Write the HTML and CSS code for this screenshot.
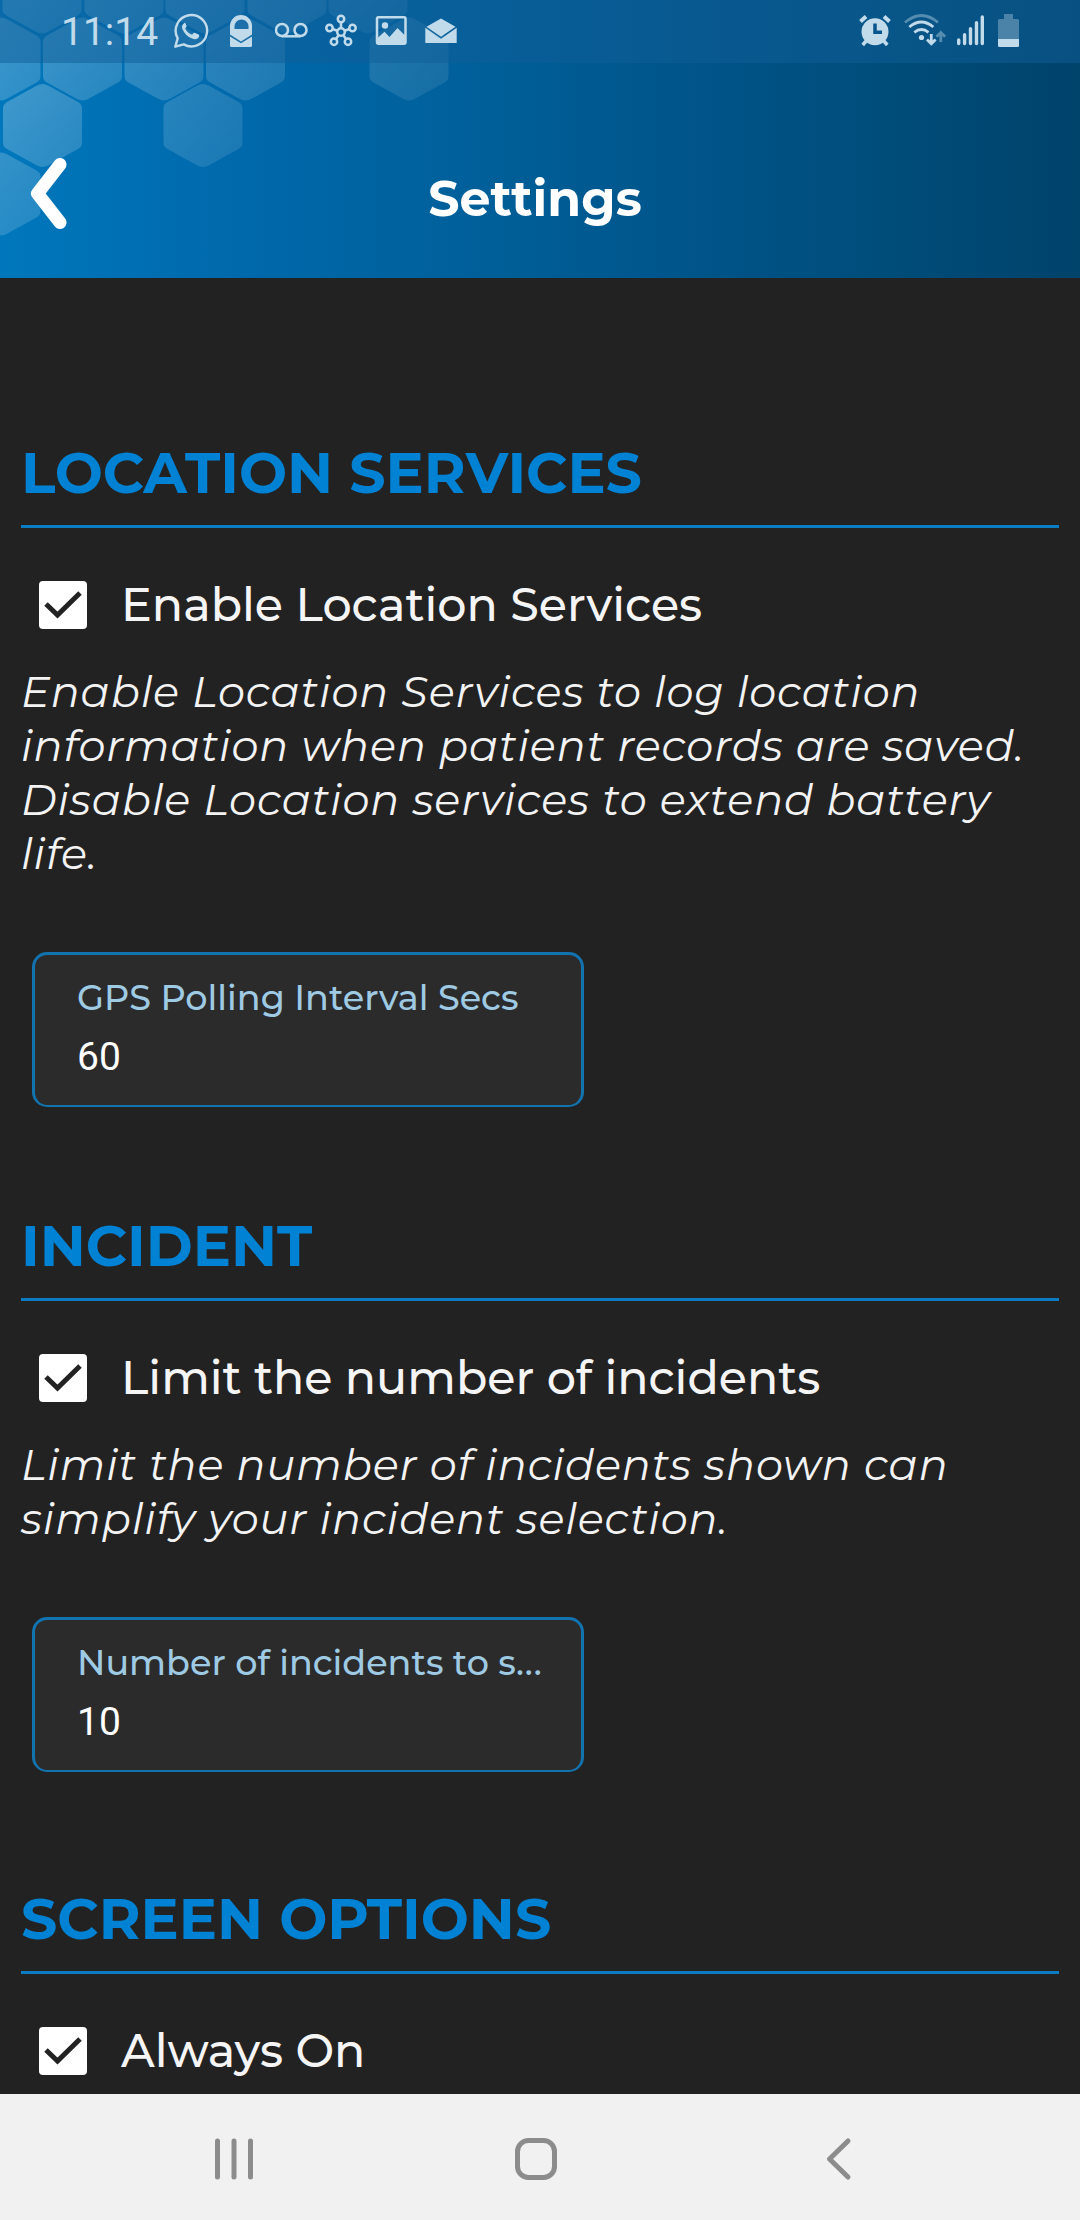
FILE: index.html
```html
<!DOCTYPE html>
<html lang="en">
<head>
<meta charset="utf-8">
<title>Settings</title>
<link rel="stylesheet" href="styles.css">
</head>
<body>
<div class="screen">
  <header class="header">
    <svg class="honeycomb" viewBox="0 0 480 278" width="480" height="278">
      <defs>
        <linearGradient id="sheen" x1="0" y1="0" x2="1" y2="1">
          <stop offset="0" stop-color="#fff" stop-opacity="1"/>
          <stop offset="1" stop-color="#fff" stop-opacity=".62"/>
        </linearGradient>
        <path id="hex" fill="url(#sheen)" d="M-39.5-17Q-39.500-21.500-35.500-23.500L-6-39.800Q0-43 6-39.800L35.500-23.500Q39.500-21.500 39.500-17V17Q39.500 21.500 35.500 23.500L6 39.800Q0 43-6 39.800L-35.500 23.500Q-39.500 21.500-39.500 17Z"/>
      </defs>
      <use href="#hex" x="42" y="-8" opacity=".25"/>
      <use href="#hex" x="124" y="-8" opacity=".23"/>
      <use href="#hex" x="205" y="-8" opacity=".21"/>
      <use href="#hex" x="287" y="-8" opacity=".19"/>
      <use href="#hex" x="368" y="-8" opacity=".14"/>
      <use href="#hex" x="1" y="59" opacity=".27"/>
      <use href="#hex" x="82.500" y="59" opacity=".24"/>
      <use href="#hex" x="164" y="59" opacity=".21"/>
      <use href="#hex" x="245.500" y="59" opacity=".18"/>
      <use href="#hex" x="409" y="59" opacity=".13"/>
      <use href="#hex" x="42.500" y="125.500" opacity=".25"/>
      <use href="#hex" x="203" y="125.500" opacity=".16"/>
      <use href="#hex" x="1" y="194" opacity=".22"/>
    </svg>
    <div class="status">
      <span class="clock">11:14</span>
      <div class="notifications">
        <svg class="icon" viewBox="173 13 36 36"><path d="M175.300 46.700l2.400-8.300a15.700 15.700 0 1 1 6 6z" fill="none" stroke="currentColor" stroke-width="2.400" stroke-linejoin="round"/><path d="M184.200 23.200c-2 1-2.700 3.200-1.800 5.700 1.700 4.300 5.200 8 9.700 9.700 3.600 1.300 6.300.200 7-2.400.3-1.100-.2-1.500-1-1.900l-3-1.400c-.8-.4-1.200-.2-1.700.4l-1.300 1.500c-3.200-1-5.600-3.300-7-6.200l1.200-1.500c.4-.5.4-.8.200-1.400l-1.200-2.700c-.2-.4-.6-.3-1.100.2z" fill="currentColor"/></svg>
        <svg class="icon" viewBox="223 13 36 36"><path fill="currentColor" fill-rule="evenodd" d="M230 34.500V26a11 11 0 0 1 22 0v8.500l-11 7zM234.500 29h14v-2.500a7 7 0 0 0-14 0z"/><path fill="currentColor" d="M230 36.500l11 6.800 11-6.800V45.500q0 1.500-1.500 1.500h-19q-1.500 0-1.500-1.500z"/></svg>
        <svg class="icon" viewBox="273 13 36 36"><g fill="none" stroke="currentColor" stroke-width="2.500"><circle cx="282" cy="30" r="6"/><circle cx="300.500" cy="30" r="6"/><path d="M282 36.300h18.500"/></g></svg>
        <svg class="icon" viewBox="323 13 36 36"><g fill="none" stroke="currentColor" stroke-width="2.500"><circle cx="341" cy="32" r="3.800"/><circle cx="341" cy="19" r="3.200"/><circle cx="329.500" cy="28" r="3.200"/><circle cx="352.500" cy="28" r="3.200"/><circle cx="334" cy="41.700" r="3.200"/><circle cx="348" cy="41.700" r="3.200"/><path d="M341 22v6.200M332.500 29l4.900 1.700M349.500 29l-4.900 1.700M335.800 39.200l2.800-4M346.200 39.200l-2.800-4"/></g></svg>
        <svg class="icon" viewBox="373 13 36 36"><rect x="377" y="17.200" width="28.500" height="26.500" rx="1.500" fill="none" stroke="currentColor" stroke-width="2.500"/><circle cx="385" cy="25.500" r="3.200" fill="currentColor"/><path fill="currentColor" d="M377 38.500l7.500-6.800 5 5.300 8-9 8 8v8h-28.500z"/></svg>
        <svg class="icon" viewBox="423 13 36 36"><path fill="currentColor" d="M441 18.500l14.500 8.300-14.500 10-14.500-10zM425.300 27.800L441 38.800l15.700-11V43h-31.400z"/></svg>
      </div>
      <div class="system">
        <svg class="icon" viewBox="857 13 36 36"><circle cx="875" cy="31.800" r="13.500" fill="currentColor"/><path d="M860.500 21.500l5.500-5M889.500 21.500l-5.500-5" stroke="currentColor" stroke-width="4"/><path d="M867 40l-4.300 5M883 40l4.300 5" stroke="currentColor" stroke-width="3.500"/><path d="M875 23.500v8.800h7" fill="none" stroke="#07568f" stroke-width="3.500"/></svg>
        <svg class="icon wifi" viewBox="903 13 44 36"><g fill="none" stroke="currentColor" stroke-width="2.800"><path opacity=".42" d="M905 22.500q16.500-14 33 0"/><path d="M909.300 27q12-10 24 0M914.300 32.300q7.200-5.500 14.200 0"/></g><circle cx="921.500" cy="37.500" r="2.600" fill="currentColor"/><path fill="none" stroke="currentColor" stroke-width="2.800" d="M931.300 34v9M927 39.500l4.300 4.300 4.300-4.300"/><path opacity=".42" fill="none" stroke="currentColor" stroke-width="2.800" d="M940.800 42v-9M936.500 36.700l4.300-4.300 4.300 4.300"/></svg>
        <svg class="icon signal" viewBox="955 13 31 36"><path stroke="currentColor" stroke-width="3.400" stroke-linecap="round" d="M958.700 40v3.500M964.600 34.800v8.700M970.500 28.800v14.700M976.500 22.800v20.700M982.300 17v26.500"/></svg>
        <svg class="icon battery" viewBox="997 13 24 36"><path opacity=".36" fill="currentColor" d="M1004 14h9v5h4.500q1.500 0 1.500 1.500V39h-21V20.500q0-1.500 1.500-1.500h4.500z"/><path fill="currentColor" d="M998 39h21v6.500q0 1.500-1.500 1.500h-18q-1.500 0-1.500-1.500z"/></svg>
      </div>
    </div>
    <div class="toolbar">
      <svg class="back" viewBox="0 0 40 74"><path d="M32 8.500L9.500 37.500 32 66.500"/></svg>
      <h1 class="title">Settings</h1>
    </div>
  </header>

  <main class="content">
    <section class="section">
      <h2 class="heading">LOCATION SERVICES</h2>
      <div class="check">
        <svg class="box" viewBox="0 0 48 48"><rect width="48" height="48" rx="4"/><path d="M7 23L18.500 34 41 12"/></svg>
        <span class="label">Enable Location Services</span>
      </div>
      <p class="note">Enable Location Services to log location<br>information when patient records are saved.<br>Disable Location services to extend battery<br>life.</p>
      <div class="field">
        <span class="field-label">GPS Polling Interval Secs</span>
        <span class="field-value">60</span>
      </div>
    </section>
    <section class="section">
      <h2 class="heading">INCIDENT</h2>
      <div class="check">
        <svg class="box" viewBox="0 0 48 48"><rect width="48" height="48" rx="4"/><path d="M7 23L18.500 34 41 12"/></svg>
        <span class="label">Limit the number of incidents</span>
      </div>
      <p class="note">Limit the number of incidents shown can<br>simplify your incident selection.</p>
      <div class="field">
        <span class="field-label">Number of incidents to s<span class="dots">...</span></span>
        <span class="field-value">10</span>
      </div>
    </section>
    <section class="section">
      <h2 class="heading">SCREEN OPTIONS</h2>
      <div class="check">
        <svg class="box" viewBox="0 0 48 48"><rect width="48" height="48" rx="4"/><path d="M7 23L18.500 34 41 12"/></svg>
        <span class="label">Always On</span>
      </div>
    </section>
  </main>

  <nav class="navbar">
    <svg class="nav-icon" viewBox="204 2129 60 60"><path d="M217.500 2141v36M234 2141v36M250.500 2141v36"/></svg>
    <svg class="nav-icon" viewBox="506 2129 60 60"><rect x="517.500" y="2140.500" width="37" height="37" rx="11"/></svg>
    <svg class="nav-icon" viewBox="808 2129 60 60"><path d="M848 2141l-18.500 18 18.500 18"/></svg>
  </nav>
</div>
</body>
</html>
```
FILE: styles.css
```css
* { box-sizing: border-box; margin: 0; padding: 0; }

body {
  background: #222;
  font-family: Montserrat, Inter, sans-serif;
}

.screen {
  display: flex;
  flex-direction: column;
  width: 1080px;
  height: 2220px;
  overflow: hidden;
}

.header {
  position: relative;
  height: 278px;
  flex: none;
  background: linear-gradient(90deg, #0077bc 0%, #006aad 20%, #005f99 45%, #005387 67%, #004d7a 82%, #00436b 100%);
}

.honeycomb {
  position: absolute;
  top: 0;
  left: 0;
}

.status {
  position: relative;
  display: flex;
  align-items: center;
  height: 63px;
  padding: 0 59px 1px 61px;
  background: rgba(16, 93, 152, .5);
  color: #c2dbea;
}

.clock {
  width: 112px;
  font: 400 39px/62px Roboto, sans-serif;
  padding-top: 2px;
}

.notifications { display: flex; gap: 14px; }

.system {
  display: flex;
  margin-left: auto;
}

.icon { display: block; width: 36px; height: 36px; }
.wifi { width: 44px; margin-left: 10px; }
.signal { width: 31px; margin-left: 8px; }
.battery { width: 24px; margin-left: 11px; }

.toolbar {
  position: relative;
  display: flex;
  align-items: center;
  height: 215px;
  padding: 44px 78px 0 28px;
}

.back {
  width: 40px;
  height: 74px;
  fill: none;
  stroke: #fff;
  stroke-width: 13;
  stroke-linecap: round;
  stroke-linejoin: round;
}

.title {
  flex: 1;
  padding-top: 13px;
  color: #fff;
  font-size: 49px;
  font-weight: 700;
  line-height: 60px;
  text-align: center;
}

.content {
  flex: 1;
  min-height: 0;
  padding: 160px 21px 0;
}

.section { margin-bottom: 104px; }
.section:nth-child(2) { margin-bottom: 112px; }

.heading {
  padding-bottom: 17px;
  border-bottom: 3px solid #0b7cc2;
  color: #0082d4;
  font-size: 57px;
  font-weight: 700;
  line-height: 70px;
}

.check {
  display: flex;
  align-items: center;
  gap: 34px;
  height: 48px;
  margin-top: 53px;
  padding-left: 18px;
}

.box { width: 48px; height: 48px; }
.box rect { fill: #fff; }
.box path { fill: none; stroke: #222; stroke-width: 5; }

.label {
  color: #f5f5f5;
  font-size: 46px;
  font-weight: 500;
  line-height: 48px;
}

.note {
  margin-top: 36px;
  color: #f3f3f3;
  font-size: 43px;
  font-style: italic;
  font-weight: 400;
  letter-spacing: .88px;
  line-height: 54px;
  white-space: nowrap;
}

.field {
  display: flex;
  flex-direction: column;
  width: 552px;
  height: 155px;
  margin: 71px 0 0 11px;
  padding: 21px 28px 0 42px;
  border: 3px solid #1273ae;
  border-bottom-width: 2px;
  border-radius: 15px;
  background: #2b2b2b;
}

.field-label {
  color: #9fcae3;
  font-size: 35px;
  font-weight: 500;
  line-height: 44px;
  white-space: nowrap;
}

.dots { letter-spacing: 1px; }

.field-value {
  margin-top: 14px;
  color: #fff;
  font: 400 39px/46px Roboto, sans-serif;
}

.navbar {
  display: flex;
  flex: none;
  align-items: center;
  gap: 242px;
  height: 126px;
  padding: 4px 0 0 204px;
  background: #f1f1f1;
}

.nav-icon {
  width: 60px;
  height: 60px;
  fill: none;
  stroke: #8c8c8c;
  stroke-width: 5;
  stroke-linecap: round;
  stroke-linejoin: round;
}
```
